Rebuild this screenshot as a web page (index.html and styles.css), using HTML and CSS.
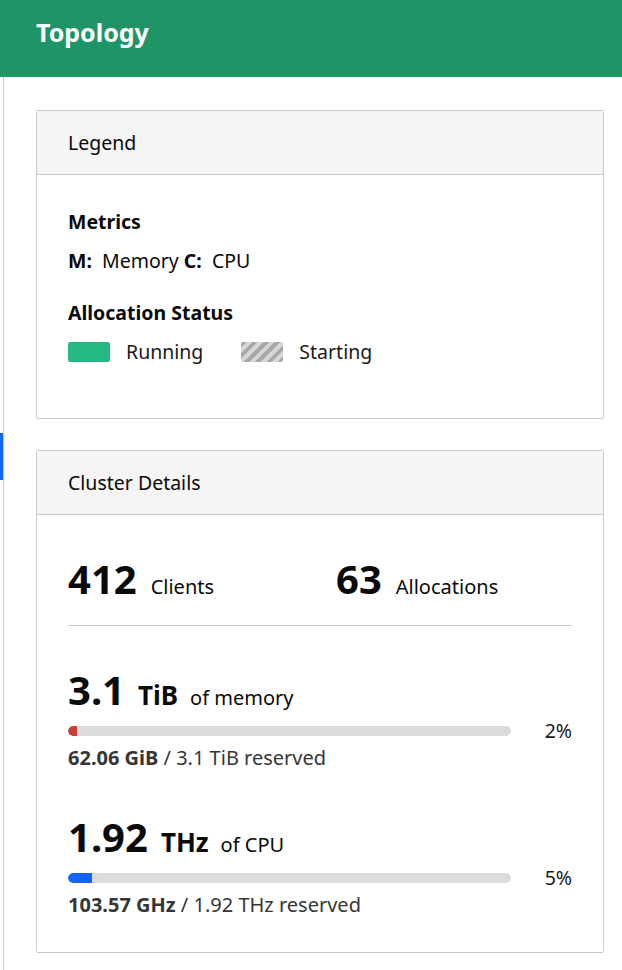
FILE: index.html
```html
<!DOCTYPE html>
<html>
<head>
<meta charset="utf-8">
<link rel="stylesheet" href="styles.css">
</head>
<body>
<header class="topbar"><h1 class="title">Topology</h1></header>
<div class="layout">
  <aside class="sidebar"><div class="active-mark"></div></aside>
  <main class="main">
    <section class="card">
      <div class="card-header">Legend</div>
      <div class="card-body legend-body">
        <h3 class="legend-title">Metrics</h3>
        <div class="metric-line"><strong>M:</strong>&nbsp; Memory <strong>C:</strong>&nbsp; CPU</div>
        <h3 class="legend-title second">Allocation Status</h3>
        <div class="status-row">
          <span class="swatch running"></span><span class="status-label">Running</span>
          <span class="swatch starting"></span><span class="status-label">Starting</span>
        </div>
      </div>
    </section>
    <section class="card">
      <div class="card-header">Cluster Details</div>
      <div class="card-body details-body">
        <div class="counts">
          <div class="count first"><span class="big">412</span><span class="count-label">Clients</span></div>
          <div class="count"><span class="big">63</span><span class="count-label">Allocations</span></div>
        </div>
        <div class="divider"></div>
        <div class="resource">
          <div class="res-head"><span class="big">3.1</span><span class="unit">TiB</span><span class="of">of memory</span></div>
          <div class="bar-row">
            <div class="bar"><div class="fill memory" style="width: 2%"></div></div>
            <span class="pct">2%</span>
          </div>
          <div class="reserved"><strong>62.06 GiB</strong> / 3.1 TiB reserved</div>
        </div>
        <div class="resource cpu">
          <div class="res-head"><span class="big">1.92</span><span class="unit">THz</span><span class="of">of CPU</span></div>
          <div class="bar-row">
            <div class="bar"><div class="fill cpu-fill" style="width: 5.4%"></div></div>
            <span class="pct">5%</span>
          </div>
          <div class="reserved"><strong>103.57 GHz</strong> / 1.92 THz reserved</div>
        </div>
      </div>
    </section>
  </main>
</div>
</body>
</html>
```
FILE: styles.css
```css
* { box-sizing: border-box; }
html, body { margin: 0; padding: 0; }
body {
  font-family: "Noto Sans", "Open Sans", sans-serif;
  color: #0a0a0a;
  background: #fff;
  width: 622px;
  height: 970px;
  overflow: hidden;
}
.topbar {
  background: #1e9467;
  height: 77px;
  padding: 0 36px;
  display: flex;
  align-items: center;
}
.title {
  margin: 0;
  color: #fff;
  font-size: 25px;
  font-weight: 700;
  line-height: 1;
  padding-bottom: 13px;
}
.layout { display: flex; }
.sidebar {
  width: 4px;
  border-right: 1px solid #c5cad3;
  min-height: 893px;
  flex: none;
}
.active-mark {
  margin-top: 356px;
  width: 3px;
  height: 47px;
  background: #1563ff;
}
.main {
  flex: 1;
  min-width: 0;
  padding: 33px 18px 0 32px;
  display: flex;
  flex-direction: column;
  gap: 31px;
}
.card {
  border: 1px solid #c5cad3;
  border-radius: 2px;
}
.card-header {
  background: #f5f5f5;
  border-bottom: 1px solid #c5cad3;
  height: 64px;
  padding: 0 31px;
  display: flex;
  align-items: center;
  font-size: 19.5px;
  color: #0a0a0a;
}
.card-body { padding: 33px 31px; }
.legend-body { padding-bottom: 53px; }
.legend-title {
  margin: 0;
  font-size: 19.5px;
  font-weight: 700;
  line-height: 27px;
}
.legend-title.second { margin-top: 25px; }
.metric-line {
  margin-top: 12px;
  font-size: 19.5px;
  line-height: 27px;
  color: #0a0a0a;
}
.status-row {
  margin-top: 12px;
  display: flex;
  align-items: center;
  font-size: 19.5px;
  line-height: 27px;
}
.swatch {
  width: 42px;
  height: 20px;
  border-radius: 2px;
  display: inline-block;
  flex: none;
}
.swatch.running { background: #25ba81; }
.swatch.starting {
  background: repeating-linear-gradient(-45deg, #a8a8a8 0 4px, #d6d6d6 4px 8px);
  margin-left: 38px;
}
.status-label { margin-left: 16px; color: #1a1a1a; }
.details-body { padding: 40px 31px 34px; }
.counts { display: flex; }
.count {
  display: flex;
  align-items: baseline;
}
.count.first { width: 268px; flex: none; }
.big {
  font-size: 40px;
  font-weight: 700;
  line-height: 48px;
}
.count-label { font-size: 20px; margin-left: 14px; }
.divider {
  margin-top: 22px;
  border-top: 1px solid #c5cad3;
}
.resource { margin-top: 40px; }
.resource.cpu { margin-top: 42px; }
.res-head { display: flex; align-items: baseline; }
.unit { font-size: 26px; font-weight: 700; margin-left: 13px; }
.of { font-size: 20px; margin-left: 12px; }
.bar-row {
  margin-top: 7px;
  display: flex;
  align-items: center;
}
.bar {
  flex: 1;
  height: 10px;
  border-radius: 5px;
  background: #dbdbdb;
  overflow: hidden;
}
.fill { height: 100%; border-radius: 5px 0 0 5px; }
.fill.memory { background: #c84034; }
.fill.cpu-fill { background: #1563ff; }
.pct {
  width: 61px;
  text-align: right;
  font-size: 19.5px;
  line-height: 20px;
  color: #1a1a1a;
}
.reserved {
  margin-top: 3px;
  font-size: 20px;
  line-height: 27px;
  color: #363636;
}
.reserved strong { color: #363636; }
```
